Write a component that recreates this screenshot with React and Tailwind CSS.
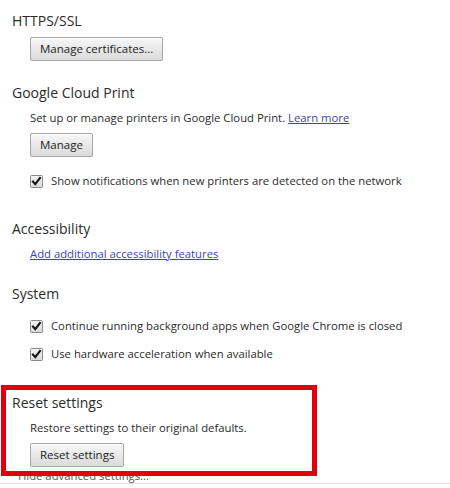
import React from "react";

const font = { fontFamily: '"Open Sans", "Noto Sans", Arial, sans-serif' };

function Heading({ children, className = "" }) {
  return (
    <div className={"h-5 flex items-center pl-3 text-[14px] text-[#2b2b2b] whitespace-nowrap " + className}>
      {children}
    </div>
  );
}

function Button({ children, className = "" }) {
  return (
    <div className={"ml-[30px] flex " + className}>
      <div className="h-6 flex items-center px-[9px] border border-[#a6a6a6] rounded-[2px] bg-gradient-to-b from-[#f7f7f7] to-[#dadada] text-[11.5px] text-[#222] whitespace-nowrap shadow-[inset_0_1px_0_#ffffff]">
        {children}
      </div>
    </div>
  );
}

function Check({ children, className = "" }) {
  return (
    <div className={"h-4 flex items-center ml-[30px] text-[11.3px] text-[#2b2b2b] whitespace-nowrap " + className}>
      <svg width="13" height="13" viewBox="0 0 13 13" className="shrink-0">
        <defs>
          <linearGradient id="cbg" x1="0" y1="0" x2="0" y2="1">
            <stop offset="0" stopColor="#f4f4f4" />
            <stop offset="1" stopColor="#d8d8d8" />
          </linearGradient>
        </defs>
        <rect x="0.5" y="0.5" width="12" height="12" rx="1" fill="url(#cbg)" stroke="#8a8a8a" />
        <path d="M3 6.6 L5.3 9.2 L10 3" fill="none" stroke="#111" strokeWidth="2.1" strokeLinecap="square" />
      </svg>
      <span className="ml-2">{children}</span>
    </div>
  );
}

export default function App() {
  return (
    <div className="relative w-[450px] h-[488px] bg-white overflow-hidden" style={font}>
      <div className="flex flex-col pt-[10px]">
        <Heading>HTTPS/SSL</Heading>
        <Button className="mt-[7px]">Manage certificates...</Button>

        <Heading className="mt-[21px]">Google Cloud Print</Heading>
        <div className="mt-2 h-4 flex items-center ml-[30px] text-[11.3px] text-[#2b2b2b] whitespace-nowrap">
          Set up or manage printers in Google Cloud Print.&nbsp;
          <span className="text-[#3b45b3] underline">Learn more</span>
        </div>
        <Button className="mt-[7px]">Manage</Button>
        <Check className="mt-4">Show notifications when new printers are detected on the network</Check>

        <Heading className="mt-[29px]">Accessibility</Heading>
        <div className="mt-2 h-4 flex items-center ml-[30px] text-[11.3px] text-[#3b45b3] underline whitespace-nowrap">
          Add additional accessibility features
        </div>

        <Heading className="mt-[21px]">System</Heading>
        <Check className="mt-[15px]">Continue running background apps when Google Chrome is closed</Check>
        <Check className="mt-3">Use hardware acceleration when available</Check>

        <Heading className="mt-[30px]">Reset settings</Heading>
        <div className="mt-2 h-4 flex items-center ml-[30px] text-[11.3px] text-[#2b2b2b] whitespace-nowrap">
          Restore settings to their original defaults.
        </div>
        <Button className="mt-[7px]">Reset settings</Button>
        <div className="mt-[2px] h-[14px] flex items-center pl-[18px] text-[11.3px] text-[#555] whitespace-nowrap">
          Hide advanced settings...
        </div>
        <div className="h-px bg-[#e2e2e2]" />
      </div>

      <div className="absolute left-[1px] top-[385px] w-[316px] h-[91px] border-[5px] border-[#e0000d]" />
    </div>
  );
}
